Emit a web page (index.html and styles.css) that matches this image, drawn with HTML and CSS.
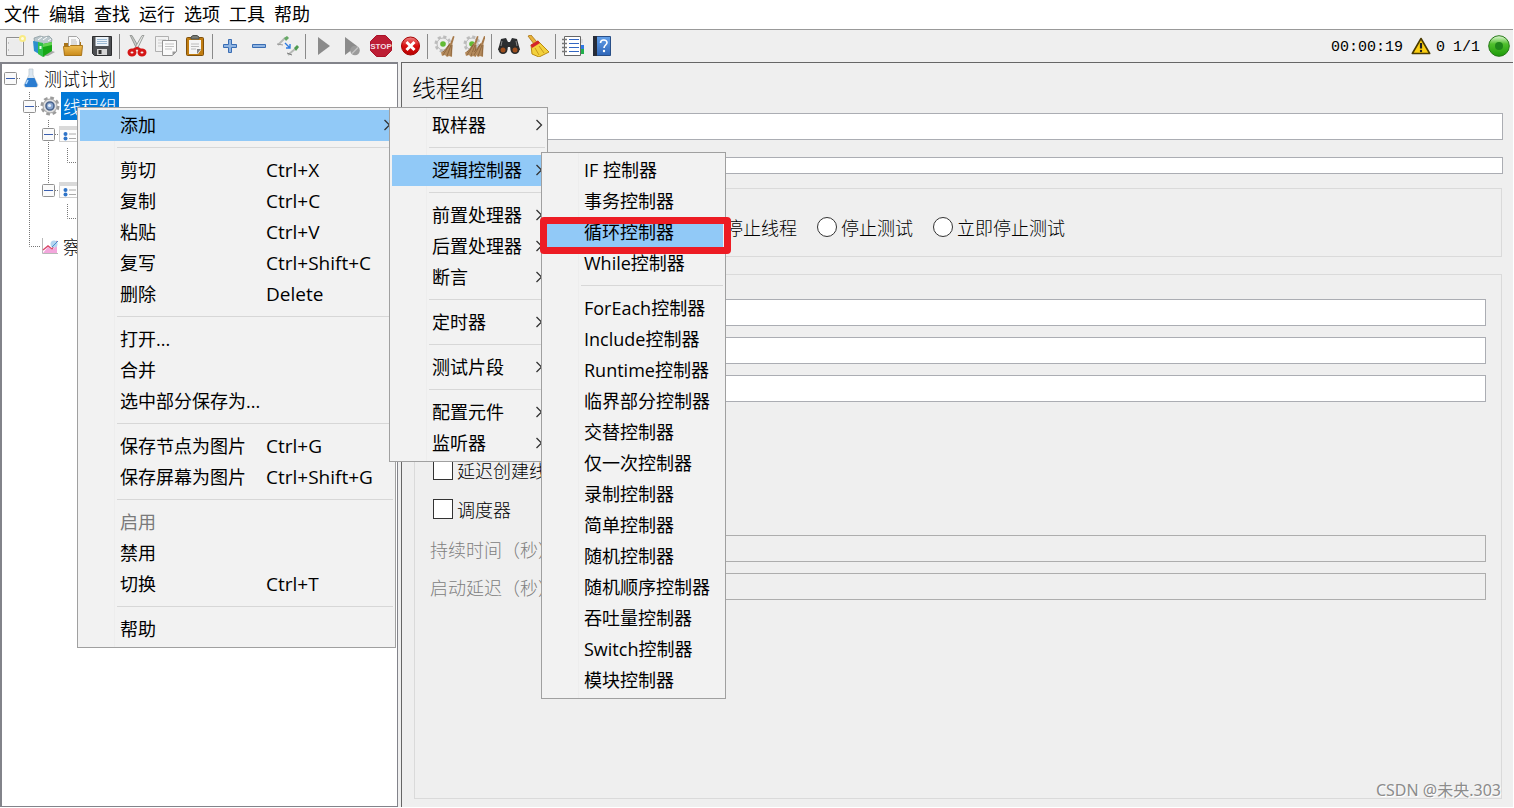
FILE: index.html
```html
<!DOCTYPE html>
<html lang="zh-CN">
<head>
<meta charset="utf-8">
<title>线程组</title>
<link rel="stylesheet" href="styles.css">
</head>
<body>
<svg class="defs" aria-hidden="true">
  <defs>
    <linearGradient id="gGreen" x1="0" y1="0" x2="0" y2="1"><stop offset="0" stop-color="#e4f8da"/><stop offset=".4" stop-color="#4fbf2c"/><stop offset="1" stop-color="#1c9a08"/></linearGradient>
    <linearGradient id="gRed" x1="0" y1="0" x2="0" y2="1"><stop offset="0" stop-color="#f08080"/><stop offset=".5" stop-color="#d80f0f"/><stop offset="1" stop-color="#b80000"/></linearGradient>
    <linearGradient id="gFolder" x1="0" y1="0" x2="0" y2="1"><stop offset="0" stop-color="#f0bf55"/><stop offset="1" stop-color="#c98a1a"/></linearGradient>
    <linearGradient id="gBlue" x1="0" y1="0" x2="0" y2="1"><stop offset="0" stop-color="#62a0ea"/><stop offset="1" stop-color="#2f66b8"/></linearGradient>
    <symbol id="arrow" viewBox="0 0 8 12"><path d="M1.500 1 6.500 6l-5 5" fill="none" stroke="#333" stroke-width="1.300"/></symbol>
    <symbol id="t-v" viewBox="0 0 19 28"><path d="M8.500 0v28" class="dots"/></symbol>
    <symbol id="t-end" viewBox="0 0 19 28"><path d="M8.500 0v14.500H19" class="dots"/></symbol>
    <symbol id="t-box" viewBox="0 0 19 28"><rect x="2.500" y="8.500" width="12" height="12" rx="1" fill="#fafafa" stroke="#919191"/><path d="M4 14.500h9" stroke="#3a5fb0"/><path d="M15 14.500h4" class="dots"/></symbol>
    <symbol id="controller" viewBox="0 0 20 20"><rect x=".500" y="2.500" width="19" height="15" fill="#fdfdfd" stroke="#cfcfcf"/><path d="M0 2h20v4H0z" fill="#d9d9d9"/><circle cx="6.500" cy="10" r="2" fill="#2f74c8"/><circle cx="6.500" cy="14.500" r="2" fill="#2f74c8"/><path d="M10 10h7M10 14.500h7" stroke="#aaa"/></symbol>
    <g id="brush"><path d="m12 0 1.500.500L11 9 9 8z" fill="#a67848"/><path d="M8.500 7 11.500 8.500 11 21 8 20 6 21 4 19 1 20 0 16.500 4 14z" fill="#b48a5c"/><path d="m9 8-7 11M10 9 6 20M11 9l-1 11M8 9l-6 7" fill="none" stroke="#815a33" stroke-width=".700"/></g>
    <g id="cog"><circle cx="9" cy="9" r="7.200" fill="none" stroke="#bcbcbc" stroke-width="2.600" stroke-dasharray="3.200 2.455"/><circle cx="9" cy="9" r="6" fill="#ededed" stroke="#b8b8b8"/><circle cx="9" cy="9" r="2.800" fill="#62bb35"/></g>
  </defs>
</svg>

<div class="app">
  <nav class="menubar">
    <button>文件</button><button>编辑</button><button>查找</button><button>运行</button><button>选项</button><button>工具</button><button>帮助</button>
  </nav>

  <div class="toolbar">
    <button class="tool" aria-label="新建"><svg viewBox="0 0 22 22"><path d="M2.500 2.500h17v18h-17z" fill="#f3f3f3" stroke="#8f8f8f"/><path d="M4 4h14v15H4z" fill="#ececec"/><circle cx="18.500" cy="3.500" r="3.500" fill="#f8eb86"/><circle cx="18.500" cy="3.500" r="1.500" fill="#fffbe0"/><path d="M4 8h1M4 15h1" stroke="#999"/></svg></button>
    <button class="tool" aria-label="模板"><svg viewBox="0 0 22 22"><path d="m1 3 6-2 4 1 5-1 3 3-1 6-9 2-7-2z" fill="#b9c6cb" stroke="#849499" stroke-width=".7"/><path d="M5 5 9 2M10 5l4-3M15 6l3-2" stroke="#fff"/><path d="m0 6 6 1v12l-5-3z" fill="#2b8fce"/><path d="m5 7 5 1v14l-5-3z" fill="#2fc04a"/><path d="m10 9 9-2v11l-9 4z" fill="#16a816"/><path d="m10 9 9-2v3l-9 2z" fill="#63d452"/><path d="M7.500 11v3" stroke="#e9ffe9" stroke-width="2"/><path d="m19 16 3 1-7 4h-4z" fill="#aaa"/></svg></button>
    <button class="tool" aria-label="打开"><svg viewBox="0 0 22 22"><path d="M2 8h5l1-1h11v12H2z" fill="#a8741a"/><path d="M6.500 1.500h8l3 3V14h-11z" fill="#fafafa" stroke="#a5a5a5"/><path d="M9 5h5M9 7h6M9 9h6" stroke="#bbb"/><path d="M1.500 11.500h6l1-1h12l-1 10h-17z" fill="url(#gFolder)" stroke="#aa7519"/></svg></button>
    <button class="tool" aria-label="保存"><svg viewBox="0 0 22 22"><path d="M1.500 1.500h19v19h-17l-2-2z" fill="#4d4f52" stroke="#2d2e30"/><path d="M4.500 2h13v9h-13z" fill="#edf3f8"/><path d="M6 4.500h10M6 6.500h10M6 8.500h10" stroke="#9cb9d2"/><path d="M6 14h10v6H6z" fill="#d6d6d6"/><path d="M7.500 15h3v4h-3z" fill="#333"/></svg></button>
    <i class="sep"></i>
    <button class="tool" aria-label="剪切"><svg viewBox="0 0 22 22"><path d="m4 0 2 .500 7 12-2 2z" fill="#c8cbc8" stroke="#858885" stroke-width=".8"/><path d="m18 0-2 .500-7 12 2 2z" fill="#ecefec" stroke="#858885" stroke-width=".8"/><ellipse cx="6" cy="17.500" rx="3" ry="2.600" fill="none" stroke="#d51616" stroke-width="3"/><ellipse cx="16" cy="17.500" rx="3" ry="2.600" fill="none" stroke="#d51616" stroke-width="3"/><path d="m7 15 4-2 4 2" stroke="#d51616" stroke-width="2.500" fill="none"/></svg></button>
    <button class="tool" aria-label="复制"><svg viewBox="0 0 22 22"><path d="M.500 1.500h13v15H.500z" fill="#f2f2f2" stroke="#b0b0b0"/><path d="M3 5h8M3 8h4M3 11h4" stroke="#ccc"/><path d="M7.500 5.500h14v11l-4 4h-10z" fill="#fafafa" stroke="#929292"/><path d="M10 9h9M10 11.500h9M10 14h7" stroke="#c2c2c2"/><path d="m21.500 16.500-4 4v-4z" fill="#999"/></svg></button>
    <button class="tool" aria-label="粘贴"><svg viewBox="0 0 22 22"><rect x="2.500" y="2.500" width="17" height="18" rx="1" fill="#c17d11" stroke="#7f500c"/><path d="M5 5h12v10l-3 4H5z" fill="#f5f5f5"/><path d="M7 9h8M7 11.500h8M7 14h5" stroke="#bbb"/><path d="m17 14-4 5v-5z" fill="#858585"/><path d="M7 4V2l2-1.500h4L15 2v2z" fill="#777b75" stroke="#4e514d"/></svg></button>
    <i class="sep"></i>
    <button class="tool" aria-label="展开"><svg viewBox="0 0 22 22"><path d="M9.500 4.500h3v5h5v3h-5v5h-3v-5h-5v-3h5z" fill="#8fb4e2" stroke="#3a6db3"/></svg></button>
    <button class="tool" aria-label="折叠"><svg viewBox="0 0 22 22"><path d="M4.500 9.500h13v3h-13z" fill="#8fb4e2" stroke="#3a6db3"/></svg></button>
    <button class="tool" aria-label="切换"><svg viewBox="0 0 22 22"><path d="m1 10 7-7" stroke="#b6b9b6" stroke-width="2"/><path d="m7 3 3-2 2 2-3 3z" fill="#66a866"/><path d="m0 9 6 1" stroke="#999"/><path d="m8 8 5 5m0-4v4H9" stroke="#2f7be0" stroke-width="1.400" fill="none"/><path d="m11 20 7-6" stroke="#b6b9b6" stroke-width="2"/><path d="m17 13 3-3 2 2-3 4z" fill="#4f9a4f"/><path d="m10 18 5 2" stroke="#777"/></svg></button>
    <i class="sep"></i>
    <button class="tool" aria-label="启动"><svg viewBox="0 0 22 22"><path d="M6 2v18l12-9z" fill="#8b8b8b"/></svg></button>
    <button class="tool" aria-label="不停顿开始"><svg viewBox="0 0 22 22"><path d="M4 2v18l12-9z" fill="#8b8b8b"/><circle cx="14" cy="15.500" r="4.800" fill="#9b9b9b"/><path d="m11 18.500 6-6" stroke="#c5c5c5" stroke-width="1.300"/></svg></button>
    <button class="tool" aria-label="停止"><svg class="wide" viewBox="0 0 22 22"><path d="M6.500.500h9l6 6v9l-6 6h-9l-6-6v-9z" fill="#bd1e35" stroke="#a91228"/><text x="11" y="14" class="stop-text">STOP</text></svg></button>
    <button class="tool" aria-label="关闭"><svg viewBox="0 0 22 22"><circle cx="11.500" cy="11" r="9" fill="url(#gRed)" stroke="#a40000"/><path d="m7.500 7 8 8m0-8-8 8" stroke="#fff" stroke-width="3"/></svg></button>
    <i class="sep"></i>
    <button class="tool" aria-label="清除"><svg viewBox="0 0 22 22"><use href="#cog"/><use href="#brush" transform="translate(7 1)"/></svg></button>
    <button class="tool" aria-label="清除全部"><svg viewBox="0 0 22 22"><use href="#cog"/><use href="#brush" transform="translate(2 1)"/><use href="#brush" transform="translate(9 1)"/></svg></button>
    <i class="sep"></i>
    <button class="tool" aria-label="查找"><svg viewBox="0 0 22 22"><path d="m3 4 5-1 2 4h2l2-4 5 1 3 11h-9l-1-3h-2l-1 3H0z" fill="#2c2e30"/><circle cx="5" cy="14.500" r="4.500" fill="#2b2b2b"/><circle cx="17" cy="14.500" r="4.500" fill="#2b2b2b"/><circle cx="5" cy="15" r="2.500" fill="#9e4e1d"/><circle cx="17" cy="15" r="2.500" fill="#9e4e1d"/><path d="m4 6-1 5M18 6l1 5" stroke="#888"/></svg></button>
    <button class="tool" aria-label="重置"><svg viewBox="0 0 22 22"><path d="m1 1 3-1 6 7-3 2z" fill="#e9b33a" stroke="#a87414" stroke-width=".8"/><path d="m4 10 7-4 11 11-10 5-7-3z" fill="#f3d13c" stroke="#b98a12"/><path d="m3.500 10 7.500-4.500 2 2.500L5 13z" fill="#d4232b"/><path d="m8 13 4 7M12 11l5 7" stroke="#c79a1d"/></svg></button>
    <i class="sep"></i>
    <button class="tool" aria-label="函数助手"><svg viewBox="0 0 22 22"><path d="M17 4h4v4h-4z" fill="#ddd"/><path d="M18 10h4v4h-4z" fill="#2f78e4"/><path d="M18 14h4v5h-4z" fill="#22b14c"/><path d="M2.500 1.500h16v19h-16z" fill="#fff" stroke="#666"/><path d="M7 4.500h10M7 8.500h10M7 12.500h10M7 16.500h10" stroke="#3467c2" stroke-width="1.200"/><path d="M0 4.500h5M0 8.500h5M0 12.500h5M0 16.500h5" stroke="#777" stroke-width="1.400"/></svg></button>
    <button class="tool" aria-label="帮助"><svg viewBox="0 0 22 22"><path d="M2.500 1.500h17v19h-17z" fill="url(#gBlue)" stroke="#294f87"/><path d="M2 1h4v20H2z" fill="#272c38"/><path d="M9.500 8c0-4 6.500-4 6.500-.500 0 2.500-3 2.500-3 5.500" fill="none" stroke="#fff" stroke-width="1.600"/><circle cx="13" cy="16" r="1.200" fill="#fff"/></svg></button>
    <div class="status">
      <span>00:00:19</span>
      <svg class="warn" viewBox="0 0 20 18"><path d="M10 1.500 18.700 16.500H1.300z" fill="#fccf10" stroke="#4a3b00" stroke-width="1.600" stroke-linejoin="round"/><path d="M10 6v5.500" stroke="#222" stroke-width="2.200"/><circle cx="10" cy="14" r="1.200" fill="#222"/></svg>
      <span>0</span><span>1/1</span>
      <svg class="led" viewBox="0 0 22 22"><circle cx="11" cy="11" r="10.300" fill="url(#gGreen)" stroke="#277a18"/><circle cx="11" cy="11" r="4" fill="#1f861a"/></svg>
    </div>
  </div>

  <main class="body">
    <section class="tree">
      <div class="row"><svg class="cell"><use href="#t-box"/></svg><svg class="node" viewBox="0 0 20 20"><path d="M8 1h4v6l5 10-1 2H4l-1-2 5-10z" fill="#dbe6f0" stroke="#b9c4cd" stroke-width=".7"/><path d="m6.500 10-3 7 1 2h11l1-2-3-7z" fill="#2b7cd0"/><path d="m7 12-2 4" stroke="#b8dcff" stroke-width="1.500"/></svg><span class="label">测试计划</span></div>
      <div class="row"><i class="cell"></i><svg class="cell"><use href="#t-v"/><use href="#t-box"/></svg><svg class="node" viewBox="0 0 20 20"><circle cx="10" cy="10" r="8" fill="none" stroke="#9b9b9b" stroke-width="3" stroke-dasharray="3.600 2.680"/><circle cx="10" cy="10" r="7" fill="#e0e0e0" stroke="#a4a4a4"/><circle cx="10" cy="10" r="4" fill="#89a6cf" stroke="#4b648c" stroke-width="1.600"/><circle cx="9.500" cy="9.500" r="1.600" fill="#e8f0fa"/></svg><span class="label selected">线程组</span></div>
      <div class="row"><i class="cell"></i><svg class="cell"><use href="#t-v"/></svg><svg class="cell"><use href="#t-v"/><use href="#t-box"/></svg><svg class="node"><use href="#controller"/></svg></div>
      <div class="row"><i class="cell"></i><svg class="cell"><use href="#t-v"/></svg><svg class="cell"><use href="#t-v"/></svg><svg class="cell"><use href="#t-end"/></svg></div>
      <div class="row"><i class="cell"></i><svg class="cell"><use href="#t-v"/></svg><svg class="cell"><path d="M8.500 0v8" class="dots"/><use href="#t-box"/></svg><svg class="node"><use href="#controller"/></svg></div>
      <div class="row"><i class="cell"></i><svg class="cell"><use href="#t-v"/></svg><i class="cell"></i><svg class="cell"><use href="#t-end"/></svg></div>
      <div class="row"><i class="cell"></i><svg class="cell"><use href="#t-end"/></svg><svg class="node" viewBox="0 0 20 20"><path d="M2.500 2v15.500H18" fill="none" stroke="#b9b9b9"/><path d="m3 17 5-6 4 3 5-5v8z" fill="#f3a6dc"/><path d="m3 14 5-4 4 3 5-8" fill="none" stroke="#d94a6a" stroke-width="1.400"/><circle cx="14" cy="8" r="3.500" fill="#b4d5ef"/><path d="m12 11 6-6" stroke="#4a8fd0"/></svg><span class="label">察</span></div>
    </section>

    <section class="editor">
      <h1>线程组</h1>
      <div class="form">
        <input type="text" aria-label="名称">
        <input type="text" class="slim" aria-label="注释">
      </div>
      <div class="group radios">
        <label><input type="radio" name="err">停止线程</label>
        <label><input type="radio" name="err">停止测试</label>
        <label><input type="radio" name="err">立即停止测试</label>
      </div>
      <div class="group props">
        <div class="fields">
          <label class="field"><span></span><input type="text" aria-label="线程数"></label>
          <label class="field"><span></span><input type="text" aria-label="时间"></label>
          <label class="field"><span></span><input type="text" aria-label="循环次数"></label>
        </div>
        <div class="checks">
          <label><input type="checkbox">延迟创建线</label>
          <label><input type="checkbox">调度器</label>
        </div>
        <div class="fields">
          <label class="field off"><span>持续时间（秒）</span><input type="text" disabled></label>
          <label class="field off"><span>启动延迟（秒）</span><input type="text" disabled></label>
        </div>
      </div>
    </section>
  </main>

  <div class="popup context">
    <button class="item hot">添加<svg class="arrow"><use href="#arrow"/></svg></button>
    <hr>
    <button class="item">剪切<kbd>Ctrl+X</kbd></button>
    <button class="item">复制<kbd>Ctrl+C</kbd></button>
    <button class="item">粘贴<kbd>Ctrl+V</kbd></button>
    <button class="item">复写<kbd>Ctrl+Shift+C</kbd></button>
    <button class="item">删除<kbd>Delete</kbd></button>
    <hr>
    <button class="item">打开...</button>
    <button class="item">合并</button>
    <button class="item">选中部分保存为...</button>
    <hr>
    <button class="item">保存节点为图片<kbd>Ctrl+G</kbd></button>
    <button class="item">保存屏幕为图片<kbd>Ctrl+Shift+G</kbd></button>
    <hr>
    <button class="item" disabled>启用</button>
    <button class="item">禁用</button>
    <button class="item">切换<kbd>Ctrl+T</kbd></button>
    <hr>
    <button class="item">帮助</button>
  </div>

  <div class="popup add">
    <button class="item">取样器<svg class="arrow"><use href="#arrow"/></svg></button>
    <hr>
    <button class="item hot">逻辑控制器<svg class="arrow"><use href="#arrow"/></svg></button>
    <hr>
    <button class="item">前置处理器<svg class="arrow"><use href="#arrow"/></svg></button>
    <button class="item">后置处理器<svg class="arrow"><use href="#arrow"/></svg></button>
    <button class="item">断言<svg class="arrow"><use href="#arrow"/></svg></button>
    <hr>
    <button class="item">定时器<svg class="arrow"><use href="#arrow"/></svg></button>
    <hr>
    <button class="item">测试片段<svg class="arrow"><use href="#arrow"/></svg></button>
    <hr>
    <button class="item">配置元件<svg class="arrow"><use href="#arrow"/></svg></button>
    <button class="item">监听器<svg class="arrow"><use href="#arrow"/></svg></button>
  </div>

  <div class="popup logic">
    <button class="item">IF 控制器</button>
    <button class="item">事务控制器</button>
    <button class="item hot">循环控制器</button>
    <button class="item">While控制器</button>
    <hr>
    <button class="item">ForEach控制器</button>
    <button class="item">Include控制器</button>
    <button class="item">Runtime控制器</button>
    <button class="item">临界部分控制器</button>
    <button class="item">交替控制器</button>
    <button class="item">仅一次控制器</button>
    <button class="item">录制控制器</button>
    <button class="item">简单控制器</button>
    <button class="item">随机控制器</button>
    <button class="item">随机顺序控制器</button>
    <button class="item">吞吐量控制器</button>
    <button class="item">Switch控制器</button>
    <button class="item">模块控制器</button>
  </div>

  <div class="marker"></div>
  <div class="watermark">CSDN @未央.303</div>
</div>
</body>
</html>
```
FILE: styles.css
```css
* { box-sizing: border-box; }

body {
  margin: 0;
  background: #fff;
  color: #000;
  font: 18px/28px "Open Sans", "Noto Sans CJK SC", sans-serif;
}

button {
  margin: 0;
  padding: 0;
  border: 0;
  background: none;
  color: inherit;
  font: inherit;
}

svg { display: block; }

.defs { position: absolute; width: 0; height: 0; }

.app {
  position: relative;
  display: flex;
  flex-direction: column;
  height: 100vh;
  overflow: hidden;
  padding: 0 1px 1px 0;
}

/* menu bar */
.menubar {
  display: flex;
  gap: 9px;
  height: 30px;
  padding: 0 4px 2px;
  border-bottom: 1px solid #999;
}

/* toolbar */
.toolbar {
  display: flex;
  align-items: center;
  height: 32px;
  background: #efefef;
}

.tool {
  flex: none;
  display: grid;
  place-items: center;
  width: 29px;
  height: 28px;
}

.tool svg { width: 22px; height: 22px; }

.stop-text {
  fill: #f3dfe2;
  font: bold 8px "Liberation Sans", sans-serif;
  text-anchor: middle;
}

.sep {
  flex: none;
  width: 6px;
  height: 25px;
  background: linear-gradient(#8a8a8a, #8a8a8a) 3px 0 / 1px 100% no-repeat;
}

.status {
  display: flex;
  align-items: center;
  gap: 8px;
  margin-left: auto;
  padding-right: 3px;
  font-family: "Liberation Mono", monospace;
  font-size: 15px;
}

.status span { padding-top: 4px; }
.status .warn + span { margin-left: -3px; }
.warn { width: 20px; height: 18px; }
.led { width: 22px; height: 22px; }

/* panes */
.body {
  flex: 1;
  display: flex;
  gap: 3px;
  min-height: 0;
  background: #efefef;
  font-family: "Noto Sans CJK SC", sans-serif;
  font-weight: 300;
}

.tree {
  flex: none;
  width: 398px;
  border: 2px solid #82838a;
  border-width: 2px 1px 1px 2px;
  background: #fff;
}

.row { display: flex; align-items: center; height: 28px; }
.cell { flex: none; width: 19px; height: 28px; }
.node { flex: none; width: 20px; height: 20px; }
.dots { fill: none; stroke: #777; stroke-dasharray: 1 1; }
.label { height: 28px; padding: 0 2px; margin-left: 1px; }
.selected { background: #0078d7; color: #fff; }

.editor {
  flex: 1;
  display: flex;
  flex-direction: column;
  border: 1px solid #666;
  border-width: 1px 0 0 1px;
  padding: 8px 10px 8px 12px;
}

h1 {
  margin: 0 -2px 10px;
  font-size: 24px;
  font-weight: 300;
  line-height: 32px;
}

.form { display: grid; gap: 17px; margin-bottom: 14px; padding-left: 80px; }
.field { display: flex; align-items: center; height: 27px; }
.field span { flex: none; width: 145px; white-space: nowrap; }

.form input, .field input {
  flex: 1;
  min-width: 0;
  height: 27px;
  margin: 0;
  border: 1px solid #abadb3;
  background: #fff;
}

.form .slim { height: 17px; }
.field input:disabled { background: #efefef; border-color: #adadad; }
.off { color: #808080; }

.group { border: 1px solid #dadada; margin-right: 1px; }

.radios {
  display: flex;
  align-items: center;
  gap: 20px;
  height: 69px;
  padding: 9px 18px 0 286px;
  margin-bottom: 17px;
}

.radios label, .checks label {
  display: flex;
  align-items: center;
  gap: 4px;
  white-space: nowrap;
}

.radios input, .checks input {
  appearance: none;
  width: 20px;
  height: 20px;
  margin: 0;
  border: 1px solid #333;
  background: #fff;
}

.radios input { border-radius: 50%; }

.props { flex: 1; padding: 24px 15px; }
.fields { display: grid; gap: 11px; }
.checks { display: grid; gap: 11px; padding: 54px 3px 12px; }

/* popup menus */
.popup {
  position: absolute;
  border: 1px solid #a0a0a0;
  padding: 2px;
  background: linear-gradient(#ededed, #ededed) 36px 0 / 1px 100% no-repeat #f2f2f2;
}

.context { left: 77px; top: 107px; width: 319px; }
.add { left: 389px; top: 107px; width: 159px; }
.logic { left: 541px; top: 152px; width: 185px; }

.item {
  display: grid;
  grid-template-columns: 146px 1fr auto;
  align-items: center;
  width: 100%;
  height: 31px;
  padding: 0 2px 1px 40px;
  text-align: left;
  white-space: nowrap;
}

.add .item, .logic .item { grid-template-columns: 1fr auto; }
.context .arrow { grid-column: 3; }
.item:disabled { color: #7a7a7a; }
.hot { background: #91c9f7; }
.item kbd { font: inherit; font-size: 19px; }
.arrow { width: 8px; height: 12px; }

hr {
  height: 1px;
  margin: 6px 0 7px 37px;
  border: 0;
  background: #d7d7d7;
}

.marker {
  position: absolute;
  left: 540px;
  top: 217px;
  width: 191px;
  height: 37px;
  border: 7px solid #ed1c24;
  border-radius: 4px;
}

.watermark {
  position: absolute;
  right: 13px;
  bottom: 4px;
  color: #8c8c8c;
  font: 16px/28px "Noto Sans", "Noto Sans CJK SC", sans-serif;
  text-shadow: 1px 1px #fff;
}
```
